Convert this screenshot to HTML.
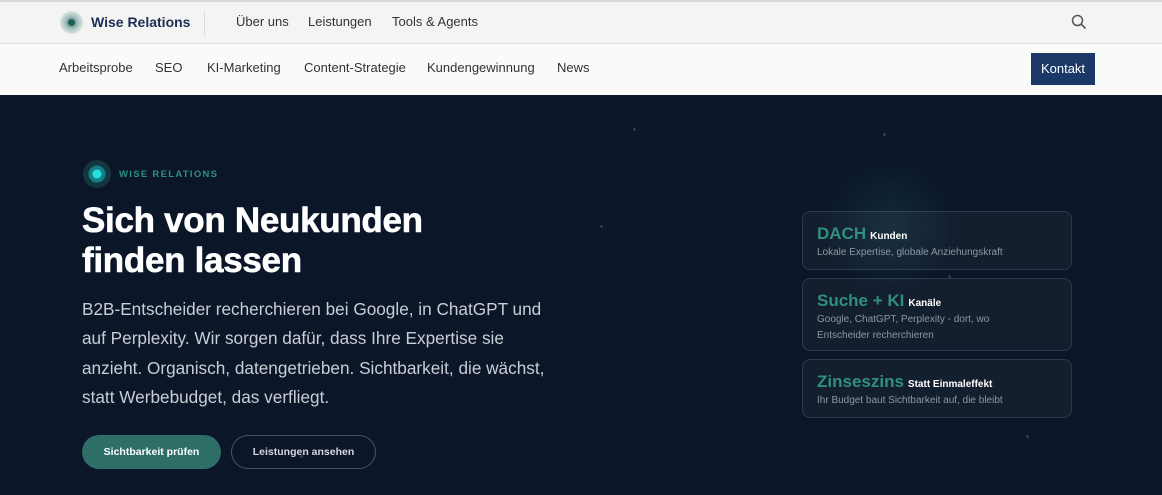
<!DOCTYPE html>
<html><head><meta charset="utf-8"><style>
*{margin:0;padding:0;box-sizing:border-box}
body{width:1162px;height:495px;overflow:hidden;font-family:"Liberation Sans",Arial,sans-serif;background:#0b1628;position:relative}
.top{position:absolute;left:0;top:0;width:1162px;height:44px;background:#f4f4f2;border-top:2px solid #d8d8d6;border-bottom:1px solid #e0e0de}
.sub{position:absolute;left:0;top:44px;width:1162px;height:51px;background:#fafaf9}
.a{position:absolute;font-size:13px;color:#333;white-space:nowrap}
.hero{position:absolute;left:0;top:95px;width:1162px;height:400px;background:#0b1628;overflow:hidden}
.card{position:absolute;left:802px;width:270px;border:1px solid rgba(255,255,255,0.12);border-radius:8px;background:rgba(255,255,255,0.035);padding:0 14px}
.big{color:#2f8f80;font-weight:bold;font-size:17px}
.sm{color:#fff;font-weight:bold;font-size:10px;margin-left:4px}
.d{color:#8d96a4;font-size:10px;line-height:16px}
.dot{position:absolute;width:3px;height:3px;border-radius:50%;background:#2a3d56}
</style></head><body>
<div class="top">
 <div style="position:absolute;left:60px;top:9px;width:23px;height:23px;border-radius:50%;background:radial-gradient(circle,#1f5e57 0 3px,#7fa8a2 4px,#b8cfcb 8px,#dfe6e4 12px)"></div>
 <div class="a" style="left:91px;top:12px;font-weight:bold;color:#1b2f55;font-size:14px">Wise Relations</div>
 <div style="position:absolute;left:204px;top:9px;width:1px;height:25px;background:#ddd"></div>
 <div class="a" style="left:236px;top:12px">Über uns</div>
 <div class="a" style="left:308px;top:12px">Leistungen</div>
 <div class="a" style="left:392px;top:12px">Tools &amp; Agents</div>
 <svg style="position:absolute;left:1071px;top:12px" width="16" height="16" viewBox="0 0 16 16"><circle cx="6.5" cy="6.5" r="5" fill="none" stroke="#555" stroke-width="1.5"/><path d="M10.3 10.3L14.5 14.5" stroke="#555" stroke-width="1.6"/></svg>
</div>
<div class="sub">
 <div class="a" style="left:59px;top:16px">Arbeitsprobe</div>
 <div class="a" style="left:155px;top:16px">SEO</div>
 <div class="a" style="left:207px;top:16px">KI-Marketing</div>
 <div class="a" style="left:304px;top:16px">Content-Strategie</div>
 <div class="a" style="left:427px;top:16px">Kundengewinnung</div>
 <div class="a" style="left:557px;top:16px">News</div>
 <div style="position:absolute;left:1031px;top:9px;width:64px;height:32px;background:#1b3866;color:#fff;font-size:13px;text-align:center;line-height:32px">Kontakt</div>
</div>
<div class="hero">
 <div style="position:absolute;left:820px;top:60px;width:140px;height:140px;border-radius:50%;background:radial-gradient(circle,rgba(40,110,110,0.22),rgba(40,110,110,0) 70%)"></div>
 <div class="dot" style="left:633px;top:33px"></div><div class="dot" style="left:600px;top:130px"></div>
 <div class="dot" style="left:948px;top:180px"></div><div class="dot" style="left:1026px;top:340px"></div>
 <div class="dot" style="left:883px;top:38px"></div><div class="dot" style="left:300px;top:360px"></div>
 <div style="position:absolute;left:83px;top:65px;width:28px;height:28px;border-radius:50%;background:radial-gradient(circle,#22e0e0 0 4px,#137f85 5px 8px,#12363f 9px 14px)"></div>
 <div style="position:absolute;left:119px;top:74px;color:#2f8f80;font-size:9.5px;font-weight:bold;letter-spacing:1.3px">WISE RELATIONS</div>
 <div style="position:absolute;left:82px;top:106px;color:#fff;font-weight:bold;font-size:35px;line-height:40px;letter-spacing:-0.3px;-webkit-text-stroke:0.6px #fff">Sich von Neukunden<br>finden lassen</div>
 <div style="position:absolute;left:82px;top:200px;width:490px;color:#c9cdd5;font-size:17.2px;line-height:29.3px">B2B-Entscheider recherchieren bei Google, in ChatGPT und<br>auf Perplexity. Wir sorgen dafür, dass Ihre Expertise sie<br>anzieht. Organisch, datengetrieben. Sichtbarkeit, die wächst,<br>statt Werbebudget, das verfliegt.</div>
 <div style="position:absolute;left:82px;top:340px;width:139px;height:34px;border-radius:17px;background:#2e6e67;color:#fff;font-size:10.5px;font-weight:bold;text-align:center;line-height:34px">Sichtbarkeit prüfen</div>
 <div style="position:absolute;left:231px;top:340px;width:145px;height:34px;border-radius:17px;border:1px solid #4a5566;color:#d5d8de;font-size:10.5px;font-weight:bold;text-align:center;line-height:32px">Leistungen ansehen</div>
 <div class="card" style="top:116px;height:59px;padding-top:12px"><span class="big">DACH</span><span class="sm">Kunden</span><div class="d" style="margin-top:1px">Lokale Expertise, globale Anziehungskraft</div></div>
 <div class="card" style="top:183px;height:73px;padding-top:12px"><span class="big">Suche + KI</span><span class="sm">Kanäle</span><div class="d" style="margin-top:1px">Google, ChatGPT, Perplexity - dort, wo<br>Entscheider recherchieren</div></div>
 <div class="card" style="top:264px;height:59px;padding-top:12px"><span class="big">Zinseszins</span><span class="sm">Statt Einmaleffekt</span><div class="d" style="margin-top:1px">Ihr Budget baut Sichtbarkeit auf, die bleibt</div></div>
</div>
</body></html>
